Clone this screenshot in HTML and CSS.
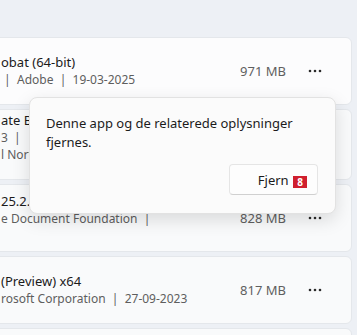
FILE: index.html
```html
<!DOCTYPE html>
<html>
<head>
    <meta name="viewport" content="width=device-width, initial-scale=1" />
    <title>Installerede apps</title>
    <link rel="stylesheet" href="styles.css">
</head>

<body>

<div class="app-list">
    <div class="app-row">
        <div class="app-info">
            <div class="app-title">obat (64-bit)</div>
            <div class="app-sub">&nbsp;| &nbsp;Adobe &nbsp;| &nbsp;19-03-2025</div>
        </div>
        <div class="app-size">971 MB</div>
        <button class="more-button">
            <svg width="14" height="4" viewBox="0 0 14 4"><circle cx="2" cy="2" r="1.3"/><circle cx="7" cy="2" r="1.3"/><circle cx="12" cy="2" r="1.3"/></svg>
        </button>
    </div>

    <div class="app-row app-row-tall">
        <div class="app-info app-info-top">
            <div class="app-title">ate B</div>
            <div class="app-sub">3 &nbsp;|</div>
            <div class="app-sub">l Nort</div>
        </div>
    </div>

    <div class="app-row">
        <div class="app-info">
            <div class="app-title">25.2.</div>
            <div class="app-sub">e Document Foundation &nbsp;|</div>
            <div class="app-sub">&nbsp;</div>
        </div>
        <div class="app-size">828 MB</div>
        <button class="more-button">
            <svg width="14" height="4" viewBox="0 0 14 4"><circle cx="2" cy="2" r="1.3"/><circle cx="7" cy="2" r="1.3"/><circle cx="12" cy="2" r="1.3"/></svg>
        </button>
    </div>

    <div class="app-row">
        <div class="app-info">
            <div class="app-title">(Preview) x64</div>
            <div class="app-sub">rosoft Corporation &nbsp;| &nbsp;27-09-2023</div>
        </div>
        <div class="app-size">817 MB</div>
        <button class="more-button">
            <svg width="14" height="4" viewBox="0 0 14 4"><circle cx="2" cy="2" r="1.3"/><circle cx="7" cy="2" r="1.3"/><circle cx="12" cy="2" r="1.3"/></svg>
        </button>
    </div>

    <div class="app-row"></div>
</div>

<div class="flyout">
    <p class="flyout-text">Denne app og de relaterede oplysninger fjernes.</p>
    <div class="flyout-actions">
        <button class="remove-button">Fjern <span class="key-badge">8</span></button>
    </div>
</div>

</body>
</html>
```

FILE: styles.css
```css
body {
    margin: 0;
    padding: 0;
    height: 335px;
    overflow: hidden;
    background-color: #edf0f5;
    font-family: "Noto Sans", "Open Sans", sans-serif;
    color: #1b1b1b;
    position: relative;
}

.app-list {
    display: flex;
    flex-direction: column;
    gap: 4px;
    padding-top: 37px;
    margin-left: -10px;
    margin-right: 5px;
}

.app-row {
    display: flex;
    align-items: center;
    box-sizing: border-box;
    height: 68px;
    flex-shrink: 0;
    padding: 0 20px 0 10px;
    background-color: #f9fafb;
    border: 1px solid #e4e7eb;
    border-radius: 6px;
}

.app-row:first-child {
    background-color: #fcfcfd;
}

.app-row-tall {
    height: 71px;
}

.app-info {
    flex: 1;
    white-space: nowrap;
}

.app-info-top {
    align-self: flex-start;
    padding-top: 2px;
}

.app-title {
    font-size: 13px;
    line-height: 17px;
}

.app-sub {
    font-size: 12px;
    line-height: 17px;
    color: #5e5e5e;
}

.app-size {
    font-size: 13px;
    color: #5f5f5f;
    margin-right: 13px;
}

.more-button {
    width: 32px;
    height: 32px;
    border: none;
    background: none;
    padding: 0;
    display: flex;
    align-items: center;
    justify-content: center;
    fill: #2b2b2b;
}

.flyout {
    position: absolute;
    left: 29px;
    top: 97px;
    width: 307px;
    box-sizing: border-box;
    padding: 16px 17px 18px 16px;
    background-color: #fbfbfb;
    border: 1px solid #e2e2e2;
    border-radius: 8px;
    box-shadow: 0px 6px 18px rgba(0, 0, 0, 0.13);
}

.flyout-text {
    margin: 0;
    font-size: 13px;
    line-height: 19px;
}

.flyout-actions {
    display: flex;
    justify-content: flex-end;
    margin-top: 12px;
}

.remove-button {
    width: 89px;
    height: 31px;
    box-sizing: border-box;
    text-align: right;
    padding: 0 10px 0 0;
    font-family: "Noto Sans", "Open Sans", sans-serif;
    font-size: 13px;
    color: #1b1b1b;
    background-color: #fdfdfd;
    border: 1px solid #e5e5e5;
    border-bottom-color: #d0d0d0;
    border-radius: 4px;
}

.key-badge {
    display: inline-block;
    width: 14px;
    height: 12px;
    line-height: 12px;
    text-align: center;
    vertical-align: -1px;
    background-color: #d01f2e;
    color: #ffffff;
    font-size: 10px;
    font-weight: bold;
    margin-left: 1px;
}
```
